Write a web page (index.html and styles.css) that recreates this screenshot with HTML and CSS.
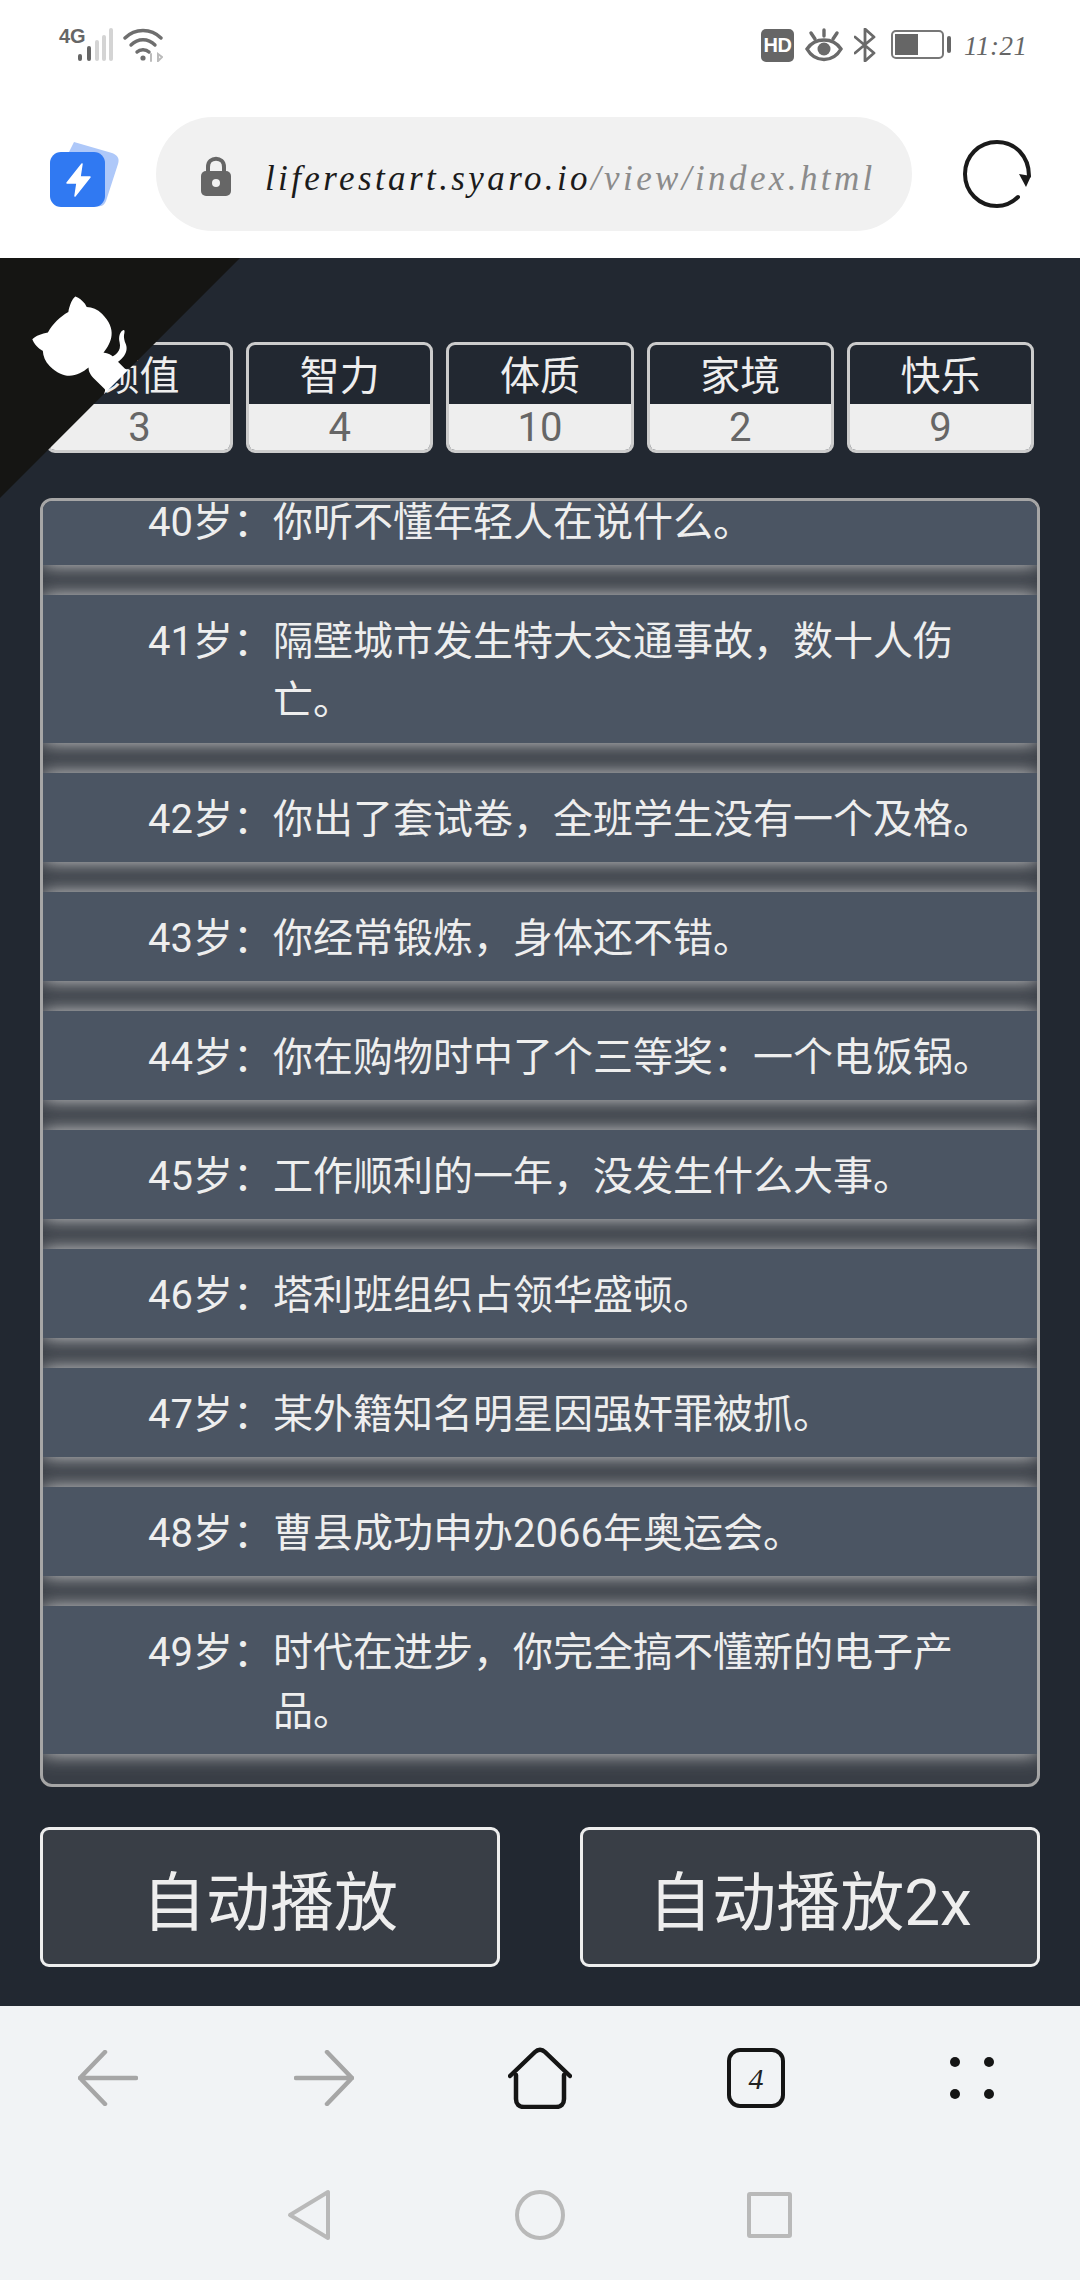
FILE: index.html
```html
<!DOCTYPE html>
<html lang="zh-CN">

<head>
  <meta charset="utf-8">
  <title>人生重开模拟器</title>
  <link rel="stylesheet" href="styles.css">
</head>

<body>
  <div class="status-bar">
    <div class="status-left">
      <span class="net-label">4G</span>
      <svg class="signal" width="35" height="34" viewBox="0 0 35 34">
        <rect x="0" y="26" width="4" height="7" rx="2" fill="#666"/>
        <rect x="9" y="18" width="4" height="15" rx="2" fill="#666"/>
        <rect x="17" y="12" width="4" height="21" rx="2" fill="#d4d4d4"/>
        <rect x="24" y="7" width="4" height="26" rx="2" fill="#d4d4d4"/>
        <rect x="31" y="0" width="4" height="33" rx="2" fill="#d4d4d4"/>
      </svg>
      <svg class="wifi" width="40" height="34" viewBox="0 0 40 34" fill="none" stroke="#6e6e6e" stroke-width="3.4" stroke-linecap="round">
        <path d="M2 10C12 0 28 0 38 10"/>
        <path d="M8 17C15 10 25 10 32 17"/>
        <path d="M14 24C17 21 23 21 26 24"/>
        <circle cx="20" cy="30" r="2.6" fill="#6e6e6e" stroke="none"/>
        <path d="M28 33V26M35 33L39 29L35 26Z" stroke="#bbb" stroke-width="2"/>
      </svg>
    </div>
    <div class="status-right">
      <span class="hd-badge">HD</span>
      <svg class="eye" width="38" height="34" viewBox="0 0 38 34" fill="none" stroke="#6a6a6a" stroke-width="3.4" stroke-linecap="round">
        <path d="M2 21C10 9 28 9 36 21C28 35 10 35 2 21Z"/>
        <circle cx="19" cy="21" r="6.5" fill="#6a6a6a" stroke="none"/>
        <path d="M19 2V8M6 5L10 11M32 5L28 11"/>
      </svg>
      <svg class="bluetooth" width="22" height="34" viewBox="0 0 22 34" fill="none" stroke="#6a6a6a" stroke-width="2.8" stroke-linecap="round" stroke-linejoin="round">
        <path d="M1 9L20 25L11 33V1L20 9L1 25"/>
      </svg>
      <svg class="battery" width="60" height="30" viewBox="0 0 60 30">
        <rect x="1" y="1" width="51" height="27" rx="4" fill="none" stroke="#777" stroke-width="2"/>
        <rect x="4" y="4" width="23" height="21" fill="#666"/>
        <rect x="56" y="6" width="4" height="17" rx="2" fill="#666"/>
      </svg>
      <span class="clock">11:21</span>
    </div>
  </div>

  <div class="toolbar">
    <svg class="app-logo" width="70" height="68" viewBox="0 0 70 68">
      <path d="M24 2L62 13C67 15 70 18 68 24L56 61C54 66 50 67 46 66L10 30Z" fill="#aec8f9"/>
      <rect x="0" y="12" width="55" height="55" rx="11" fill="#3079f2"/>
      <path d="M32 24L17 43H27L25 56L40 37H30Z" fill="#fff" stroke="#fff" stroke-width="1.5" stroke-linejoin="round"/>
    </svg>
    <div class="url-pill">
      <svg class="lock" width="30" height="40" viewBox="0 0 30 40">
        <path d="M7 17V11C7 0 23 0 23 11V17" fill="none" stroke="#666" stroke-width="4"/>
        <rect x="0" y="15" width="30" height="25" rx="5" fill="#666"/>
        <circle cx="15" cy="27" r="4" fill="#f1f1f1"/>
      </svg>
      <span class="url-text">liferestart.syaro.io<span class="url-path">/view/index.html</span></span>
    </div>
    <svg class="reload" width="68" height="68" viewBox="0 0 68 68" fill="none">
      <path d="M55 57C48 64 41 66 34 66C16 66 2 52 2 34C2 16 16 2 34 2C52 2 66 16 66 36" stroke="#1a1a1a" stroke-width="4" stroke-linecap="round"/>
      <path d="M56 34L68 36L63 47Z" fill="#1a1a1a"/>
    </svg>
  </div>

  <div class="game">
    <a class="corner">
      <svg width="240" height="240" viewBox="0 0 250 250">
        <path d="M0,0 L115,115 L130,115 L142,142 L250,250 L250,0 Z" fill="#151513"/>
        <path d="M128.3,109.0 C113.8,99.7 119.0,89.6 119.0,89.6 C122.0,82.7 120.5,78.6 120.5,78.6 C119.2,72.0 123.4,76.3 123.4,76.3 C127.3,80.9 125.5,87.3 125.5,87.3 C122.9,97.6 130.6,101.9 134.4,103.2" fill="#fff"/>
        <path d="M115.0,115.0 C114.9,115.1 118.7,116.5 119.8,115.4 L133.7,101.6 C136.9,99.2 139.9,98.4 142.2,98.6 C133.8,88.0 127.5,74.4 143.8,58.0 C148.5,53.4 154.0,51.2 159.7,51.0 C160.3,49.4 163.2,43.6 171.4,40.1 C171.4,40.1 176.1,42.5 178.8,56.2 C183.1,58.6 187.2,61.8 190.9,65.4 C194.5,69.0 197.7,73.2 200.1,77.6 C213.8,80.2 216.3,84.9 216.3,84.9 C212.7,93.1 206.9,96.0 205.4,96.6 C205.1,102.4 203.0,107.8 198.3,112.5 C181.9,128.9 168.3,122.5 157.7,114.1 C157.9,116.9 156.7,120.9 152.7,124.9 L141.0,136.5 C139.8,137.7 141.6,141.9 141.8,141.8 Z" fill="#fff"/>
      </svg>
    </a>

    <ul class="stats">
      <li class="stat"><div class="stat-name">颜值</div><div class="stat-value">3</div></li>
      <li class="stat"><div class="stat-name">智力</div><div class="stat-value">4</div></li>
      <li class="stat"><div class="stat-name">体质</div><div class="stat-value">10</div></li>
      <li class="stat"><div class="stat-name">家境</div><div class="stat-value">2</div></li>
      <li class="stat"><div class="stat-name">快乐</div><div class="stat-value">9</div></li>
    </ul>

    <div class="trajectory">
      <ul class="events">
        <li><div class="event"><span class="age">40岁：</span><span class="desc">你听不懂年轻人在说什么。</span></div></li>
        <li><div class="event"><span class="age">41岁：</span><span class="desc">隔壁城市发生特大交通事故，数十人伤亡。</span></div></li>
        <li><div class="event"><span class="age">42岁：</span><span class="desc">你出了套试卷，全班学生没有一个及格。</span></div></li>
        <li><div class="event"><span class="age">43岁：</span><span class="desc">你经常锻炼，身体还不错。</span></div></li>
        <li><div class="event"><span class="age">44岁：</span><span class="desc">你在购物时中了个三等奖：一个电饭锅。</span></div></li>
        <li><div class="event"><span class="age">45岁：</span><span class="desc">工作顺利的一年，没发生什么大事。</span></div></li>
        <li><div class="event"><span class="age">46岁：</span><span class="desc">塔利班组织占领华盛顿。</span></div></li>
        <li><div class="event"><span class="age">47岁：</span><span class="desc">某外籍知名明星因强奸罪被抓。</span></div></li>
        <li><div class="event"><span class="age">48岁：</span><span class="desc">曹县成功申办2066年奥运会。</span></div></li>
        <li><div class="event"><span class="age">49岁：</span><span class="desc">时代在进步，你完全搞不懂新的电子产品。</span></div></li>
      </ul>
    </div>

    <div class="btn-area">
      <button type="button">自动播放</button>
      <button type="button">自动播放2x</button>
    </div>
  </div>

  <div class="bottom">
    <div class="bottom-tools">
      <div class="tool">
        <svg width="60" height="56" viewBox="0 0 60 56" fill="none" stroke="#a6a6a6" stroke-width="4.5" stroke-linecap="round" stroke-linejoin="round">
          <path d="M58 28H2M27 2L2 28L27 54"/>
        </svg>
      </div>
      <div class="tool">
        <svg width="60" height="56" viewBox="0 0 60 56" fill="none" stroke="#a6a6a6" stroke-width="4.5" stroke-linecap="round" stroke-linejoin="round">
          <path d="M2 28H58M33 2L58 28L33 54"/>
        </svg>
      </div>
      <div class="tool">
        <svg width="64" height="62" viewBox="0 0 64 62" fill="none" stroke="#151515" stroke-width="4.5" stroke-linecap="round" stroke-linejoin="round">
          <path d="M2 29L27 5C30 2 34 2 37 5L62 29"/>
          <path d="M8 28V52C8 57 11 60 16 60H48C53 60 56 57 56 52V28"/>
        </svg>
      </div>
      <div class="tool">
        <span class="tab-count">4</span>
      </div>
      <div class="tool">
        <svg width="46" height="44" viewBox="0 0 46 44" fill="#151515">
          <circle cx="6" cy="6" r="5"/>
          <circle cx="40" cy="6" r="5"/>
          <circle cx="6" cy="38" r="5"/>
          <circle cx="40" cy="38" r="5"/>
        </svg>
      </div>
    </div>
    <div class="nav-keys">
      <div class="nav-key">
        <svg width="44" height="52" viewBox="0 0 44 52" fill="none" stroke="#b9b9b9" stroke-width="4" stroke-linejoin="round">
          <path d="M41 3V49L3 26Z"/>
        </svg>
      </div>
      <div class="nav-key">
        <svg width="50" height="50" viewBox="0 0 50 50" fill="none" stroke="#b9b9b9" stroke-width="4">
          <circle cx="25" cy="25" r="23"/>
        </svg>
      </div>
      <div class="nav-key nav-square">
        <svg width="45" height="46" viewBox="0 0 45 46" fill="none" stroke="#b9b9b9" stroke-width="4">
          <rect x="2" y="2" width="41" height="42" rx="1"/>
        </svg>
      </div>
    </div>
  </div>
</body>

</html>
```

FILE: styles.css
```css
html,
body,
ul {
  margin: 0;
  padding: 0;
}

body {
  width: 1080px;
  height: 2280px;
  overflow: hidden;
  background: #fff;
  font-family: Roboto, "Noto Sans CJK SC", sans-serif;
}

ul {
  list-style: none;
}

svg {
  display: block;
}

.status-bar {
  height: 90px;
  box-sizing: border-box;
  padding: 28px 56px 0 59px;
  display: flex;
  justify-content: space-between;
  align-items: flex-start;
}

.status-left,
.status-right {
  display: flex;
  align-items: flex-start;
}

.net-label {
  width: 19px;
  font-family: "Liberation Sans Narrow", "Liberation Sans", sans-serif;
  font-size: 20px;
  line-height: 17px;
  font-weight: 700;
  color: #666;
}

.wifi {
  margin-left: 10px;
}

.hd-badge {
  width: 33px;
  height: 33px;
  margin-top: 1px;
  border-radius: 5px;
  background: #666;
  color: #fff;
  font-size: 20px;
  font-weight: 700;
  line-height: 33px;
  letter-spacing: -0.5px;
  text-align: center;
  font-family: "Liberation Sans Narrow", "Liberation Sans", sans-serif;
}

.eye {
  margin-left: 11px;
}

.bluetooth {
  margin-left: 11px;
}

.battery {
  margin: 2px 0 0 15px;
}

.clock {
  width: 60px;
  margin-left: 13px;
  font-family: "Liberation Serif", serif;
  font-style: italic;
  font-size: 27px;
  line-height: 36px;
  letter-spacing: 0.5px;
  white-space: nowrap;
  color: #666;
}

.toolbar {
  height: 168px;
  display: flex;
  align-items: center;
}

.app-logo {
  margin-left: 50px;
}

.url-pill {
  width: 756px;
  height: 114px;
  margin-left: 36px;
  box-sizing: border-box;
  padding-left: 45px;
  border-radius: 57px;
  background: #f1f1f1;
  display: flex;
  align-items: center;
}

.lock {
  margin-top: 4px;
}

.url-text {
  margin: 10px 0 0 34px;
  font-family: "Liberation Serif", serif;
  font-style: italic;
  font-size: 35px;
  letter-spacing: 3.4px;
  color: #1b1b1b;
  white-space: nowrap;
}

.url-path {
  color: #8b8b8b;
}

.reload {
  margin-left: 51px;
}

.game {
  position: relative;
  height: 1748px;
  box-sizing: border-box;
  padding: 84px 40px 0;
  background: #222831;
}

.corner {
  position: absolute;
  top: 0;
  left: 0;
  z-index: 5;
  transform: scaleX(-1);
}

.stats {
  display: flex;
  gap: 13px;
  padding: 0 6px;
}

.stat {
  flex: 1;
  height: 111px;
  box-sizing: border-box;
  border: 3px solid #ccc;
  border-radius: 9px;
  overflow: hidden;
  text-align: center;
}

.stat-name {
  height: 59px;
  font-size: 40px;
  line-height: 64px;
  color: #eee;
}

.stat-value {
  height: 46px;
  font-size: 40px;
  line-height: 48px;
  color: #666;
  background: #eee;
}

.trajectory {
  height: 1289px;
  margin-top: 45px;
  box-sizing: border-box;
  border: 3px solid #a6a6a6;
  border-radius: 12px;
  overflow: hidden;
  background: #393e46;
}

.events {
  display: flex;
  flex-direction: column;
  gap: 30px;
  margin-top: -25px;
}

.events li {
  box-shadow: 0 0 18px #d4d4d4;
}

.event {
  position: relative;
  display: flex;
  padding: 16.5px 20px 13.5px 105px;
  background: #4b5563;
  font-size: 40px;
  line-height: 59px;
  color: #eee;
}

.age {
  flex: none;
}

.btn-area {
  display: flex;
  justify-content: space-between;
  margin-top: 40px;
}

.btn-area button {
  width: 460px;
  height: 140px;
  border: 3px solid #eee;
  border-radius: 9px;
  background: #393e46;
  color: #eee;
  font-family: inherit;
  font-size: 64px;
}

.bottom {
  height: 274px;
  background: #f1f3f5;
}

.bottom-tools {
  height: 144px;
  display: flex;
}

.tool {
  width: 216px;
  display: flex;
  justify-content: center;
  align-items: center;
}

.tab-count {
  width: 58px;
  height: 60px;
  box-sizing: border-box;
  border: 4px solid #151515;
  border-radius: 13px;
  font-family: "Liberation Serif", serif;
  font-style: italic;
  font-size: 30px;
  line-height: 54px;
  text-align: center;
  color: #222;
}

.nav-keys {
  height: 130px;
  display: flex;
  justify-content: center;
}

.nav-key {
  width: 231px;
  display: flex;
  justify-content: center;
  align-items: center;
}

.nav-square {
  padding-right: 3px;
  box-sizing: border-box;
}
```
